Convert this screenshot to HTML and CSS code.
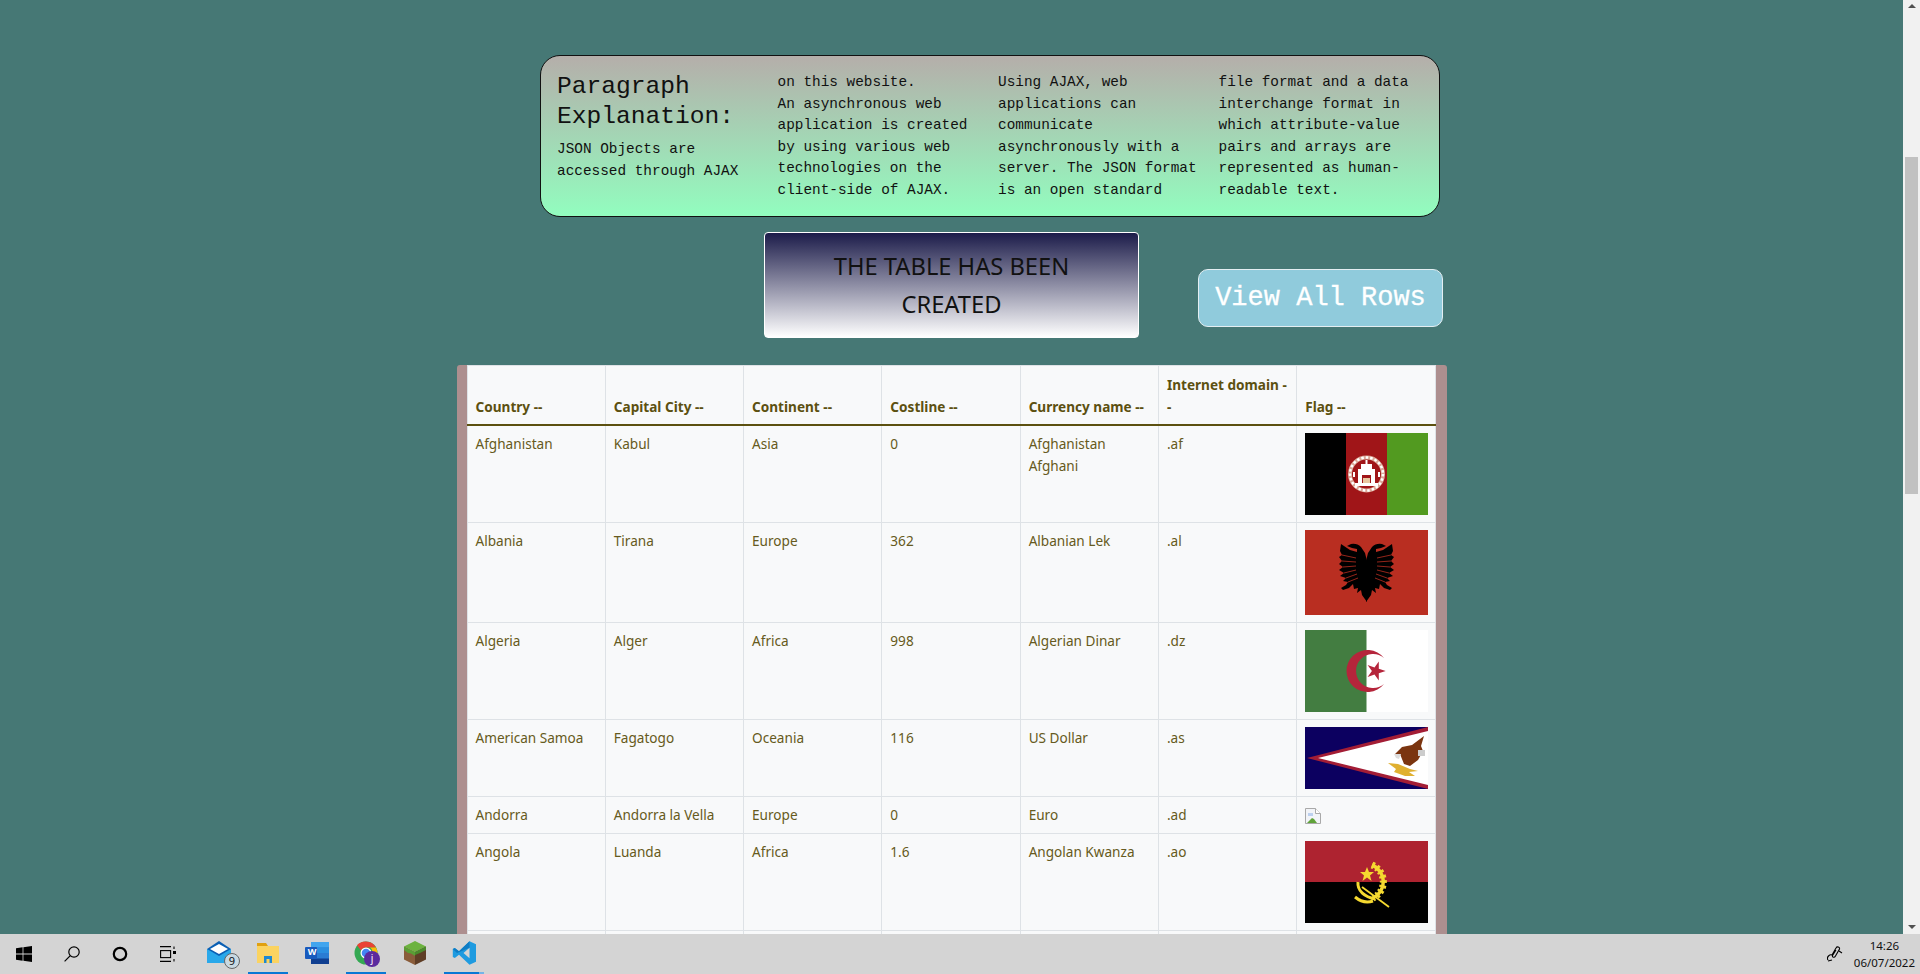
FILE: index.html
```html
<!DOCTYPE html>
<html lang="en">
<head>
    <meta charset="UTF-8">
    <title>Countries Table</title>
    <link rel="stylesheet" href="styles.css">
</head>
<body>
    <div class="window">
        <div class="page">
            <div class="explain">
                <h2>Paragraph Explanation:</h2>
                <p>JSON Objects are accessed through AJAX on this website.<br>An asynchronous web application is created by using various web technologies on the client-side of AJAX. Using AJAX, web applications can communicate asynchronously with a server. The JSON format is an open standard file format and a data interchange format in which attribute-value pairs and arrays are represented as human-readable text.</p>
            </div>

            <div class="actions">
                <div class="created">THE TABLE HAS BEEN CREATED</div>
                <button class="view-all">View All Rows</button>
            </div>

            <div class="table-wrap">
                <table>
                    <thead>
                        <tr>
                            <th>Country --</th>
                            <th>Capital City --</th>
                            <th>Continent --</th>
                            <th>Costline --</th>
                            <th>Currency name --</th>
                            <th>Internet domain --</th>
                            <th>Flag --</th>
                        </tr>
                    </thead>
                    <tbody>
                        <tr>
                            <td>Afghanistan</td>
                            <td>Kabul</td>
                            <td>Asia</td>
                            <td>0</td>
                            <td>Afghanistan Afghani</td>
                            <td>.af</td>
                            <td>
                                <svg class="flag" viewBox="0 0 123 82">
                                    <rect width="41" height="82" fill="#000"/>
                                    <rect x="41" width="41" height="82" fill="#a01518"/>
                                    <rect x="82" width="41" height="82" fill="#529a20"/>
                                    <circle cx="61.5" cy="41" r="16.5" fill="none" stroke="#dba898" stroke-width="4"/>
                                    <circle cx="61.5" cy="41" r="16.5" fill="none" stroke="#fff" stroke-width="2.5" stroke-dasharray="2.5 2"/>
                                    <path d="M50 50h23v3H50z" fill="#fff"/>
                                    <path d="M53 36h17v14h-4v-8h-9v8h-4z" fill="#fff"/>
                                    <path d="M56 31h11v5H56zM60.5 27h2v4h-2z" fill="#fff"/>
                                    <path d="M58 45h7v5h-7z" fill="#e8c8a0"/>
                                    <path d="M48 39h2v5h-2zM73 39h2v5h-2z" fill="#fff"/>
                                </svg>
                            </td>
                        </tr>
                        <tr>
                            <td>Albania</td>
                            <td>Tirana</td>
                            <td>Europe</td>
                            <td>362</td>
                            <td>Albanian Lek</td>
                            <td>.al</td>
                            <td>
                                <svg class="flag" viewBox="0 0 123 85">
                                    <rect width="123" height="85" fill="#b92e21"/>
                                    <g id="eagle-half">
                                        <path d="M62 72L57 65L56 60L52 63L53 58L49 59L48 54L44 58L38 60L36 58L41 55L43 52L38 51L41 48L35 46L39 43L34 40L38 37L34 34L37 31L34 27L37 25L35 21L36 14L45 20L52 22L52 19L47 18L42 16L46 14Q52 13 56 17L60 23L62 31Z" fill="#000"/>
                                        <path d="M51 28L37 25M51 32L37 31M51 36L38 37M51 40L39 43M52 44L41 48M53 48L43 52" fill="none" stroke="#b92e21" stroke-width=".8"/>
                                    </g>
                                    <use href="#eagle-half" transform="matrix(-1 0 0 1 123 0)"/>
                                </svg>
                            </td>
                        </tr>
                        <tr>
                            <td>Algeria</td>
                            <td>Alger</td>
                            <td>Africa</td>
                            <td>998</td>
                            <td>Algerian Dinar</td>
                            <td>.dz</td>
                            <td>
                                <svg class="flag" viewBox="0 0 123 82">
                                    <rect width="123" height="82" fill="#fff"/>
                                    <rect width="61.5" height="82" fill="#437d41"/>
                                    <path d="M79 28A21 21 0 1 0 79 54A17 17 0 1 1 79 28Z" fill="#b5253b"/>
                                    <polygon points="80.7,41 73.8,43.25 73.8,50.5 69.5,44.6 62.6,46.9 66.9,41 62.6,35.1 69.5,37.4 73.8,31.5 73.8,38.75" fill="#b5253b"/>
                                </svg>
                            </td>
                        </tr>
                        <tr>
                            <td>American Samoa</td>
                            <td>Fagatogo</td>
                            <td>Oceania</td>
                            <td>116</td>
                            <td>US Dollar</td>
                            <td>.as</td>
                            <td>
                                <svg class="flag" viewBox="0 0 123 62">
                                    <rect width="123" height="62" fill="#0c0060"/>
                                    <polygon points="2,31 123,0 123,62" fill="#a31d35"/>
                                    <polygon points="13,31 123,4 123,58" fill="#fff"/>
                                    <path d="M119 9L116 19L118 24L113 33L105 39L99 37L95 27L90 27L97 20L107 18Z" fill="#7b3510"/>
                                    <path d="M89 27L96 27L94 32L91 31Z" fill="#ddd"/>
                                    <path d="M113 23h7v6h-7z" fill="#ccc"/>
                                    <path d="M83 36L93 37L105 42L113 44L104 45L110 49L100 49L89 45L91 42Z" fill="#e0b030"/>
                                </svg>
                            </td>
                        </tr>
                        <tr>
                            <td>Andorra</td>
                            <td>Andorra la Vella</td>
                            <td>Europe</td>
                            <td>0</td>
                            <td>Euro</td>
                            <td>.ad</td>
                            <td>
                                <svg class="broken" viewBox="0 0 16 16">
                                    <path d="M.5.5h10l5 5v10H.5z" fill="#f2f4f8" stroke="#a9a9a9"/>
                                    <path d="M10.5.5v5h5" fill="#fff" stroke="#a9a9a9"/>
                                    <path d="M3 5h5v3H3z" fill="#bcd0ef"/>
                                    <path d="M2 15l5-5 2 1 3 4z" fill="#5fa33a"/>
                                </svg>
                            </td>
                        </tr>
                        <tr>
                            <td>Angola</td>
                            <td>Luanda</td>
                            <td>Africa</td>
                            <td>1.6</td>
                            <td>Angolan Kwanza</td>
                            <td>.ao</td>
                            <td>
                                <svg class="flag" viewBox="0 0 123 82">
                                    <rect width="123" height="41" fill="#ae2330"/>
                                    <rect y="41" width="123" height="41" fill="#000"/>
                                    <g fill="none" stroke="#f5d930">
                                        <path d="M67 24A18 18 0 0 1 68 57" stroke-width="3.5"/>
                                        <path d="M67 24A18 18 0 0 1 68 57" stroke-width="7" stroke-dasharray="2.5 2.5"/>
                                        <path d="M53 41C52 50 60 56 70 58M50 56C56 61 62 62 68 60" stroke-width="3"/>
                                        <path d="M57 46L84 66" stroke-width="1.8"/>
                                    </g>
                                    <polygon points="62,26 64,31 69,31 65,34.5 66.5,40 62,36.5 57.5,40 59,34.5 55,31 60,31" fill="#f5d930"/>
                                </svg>
                            </td>
                        </tr>
                        <tr class="empty-row">
                            <td></td>
                            <td></td>
                            <td></td>
                            <td></td>
                            <td></td>
                            <td></td>
                            <td></td>
                        </tr>
                    </tbody>
                </table>
            </div>
        </div>

        <div class="scrollbar">
            <span class="arrow-up"></span>
            <div class="thumb"></div>
            <span class="arrow-down"></span>
        </div>
    </div>

    <div class="taskbar">
        <div class="tb-system">
            <div class="tb-slot">
                <svg class="icon-16" viewBox="0 0 16 16"><path d="M0 2.3L6.6 1.3V7.6H0zM7.4 1.2L16 0V7.6H7.4zM0 8.4H6.6V14.7L0 13.7zM7.4 8.4H16V16L7.4 14.8z" fill="#000"/></svg>
            </div>
            <div class="tb-slot">
                <svg class="icon-16" viewBox="0 0 16 16" fill="none" stroke="#000" stroke-width="1.2"><circle cx="10" cy="6" r="5.2"/><path d="M6.3 9.7L.6 15.4"/></svg>
            </div>
            <div class="tb-slot">
                <svg class="icon-16" viewBox="0 0 16 16" fill="none" stroke="#000" stroke-width="2.2"><circle cx="8" cy="8" r="6.2"/></svg>
            </div>
            <div class="tb-slot">
                <svg class="icon-16" viewBox="0 0 16 16" fill="none" stroke="#000" stroke-width="1.1"><path d="M0 .6H11M0 15.4H11"/><rect x=".6" y="4.6" width="10" height="7"/><path d="M14 .5V3M14 13V15.5"/><rect x="13" y="5" width="3" height="3" fill="#000" stroke="none"/></svg>
            </div>
        </div>
        <div class="tb-apps">
            <div class="tb-app">
                <svg class="icon-24" viewBox="0 0 24 24">
                    <path d="M0 8L12 0L24 8V22H0z" fill="#0a5fb4"/>
                    <path d="M3 8L12 3L21 8L12 13z" fill="#fff"/>
                    <path d="M0 8L12 15L24 8V22H0z" fill="#29a8ea"/>
                </svg>
                <span class="count-badge">9</span>
            </div>
            <div class="tb-app active">
                <svg class="icon-24" viewBox="0 0 24 24">
                    <path d="M1 2H10L12 5H1z" fill="#e0a010"/>
                    <path d="M1 5H23V22H1z" fill="#fbd360"/>
                    <path d="M8 22V15H16V22H13.5V18H10.5V22z" fill="#1e88d0"/>
                </svg>
            </div>
            <div class="tb-app">
                <svg class="icon-24" viewBox="0 0 24 24">
                    <rect x="6" y="1" width="18" height="22" rx="1" fill="#2b7cd3"/>
                    <rect x="6" y="1" width="18" height="5.5" fill="#41a5ee"/>
                    <rect x="6" y="6.5" width="18" height="5.5" fill="#2b8fe0"/>
                    <rect x="6" y="12" width="18" height="5.5" fill="#2b7cd3"/>
                    <rect x="6" y="17.5" width="18" height="5.5" fill="#103f91"/>
                    <rect x="0" y="6" width="12" height="12" rx="1" fill="#185abd"/>
                </svg>
                <span class="word-w">W</span>
            </div>
            <div class="tb-app active">
                <svg class="icon-24" viewBox="0 0 24 24">
                    <circle cx="12" cy="12" r="11.5" fill="#34a853"/>
                    <path d="M12 .5A11.5 11.5 0 0 1 22 6.5H12A5.5 5.5 0 0 0 7 9.5L3 4.2A11.5 11.5 0 0 1 12 .5z" fill="#ea4335"/>
                    <path d="M22 6.5A11.5 11.5 0 0 1 12 23.5L17 15A5.5 5.5 0 0 0 16 6.5z" fill="#fbbc05"/>
                    <circle cx="12" cy="12" r="5.5" fill="#fff"/>
                    <circle cx="12" cy="12" r="4.3" fill="#4285f4"/>
                </svg>
                <span class="profile-badge">j</span>
            </div>
            <div class="tb-app">
                <svg class="icon-24" viewBox="0 0 24 24">
                    <path d="M12 0L23 5.5L12 11L1 5.5z" fill="#6cb33f"/>
                    <path d="M1 5.5L12 11V24L1 18.5z" fill="#8a5c3a"/>
                    <path d="M23 5.5L12 11V24L23 18.5z" fill="#5f3e26"/>
                    <path d="M1 5.5L12 11V15L8 12.5L5 12L1 9z" fill="#5a9e35"/>
                    <path d="M23 5.5L12 11V14L17 12L23 9z" fill="#4a8a2c"/>
                </svg>
            </div>
            <div class="tb-app active code">
                <svg class="icon-24" viewBox="0 0 24 24">
                    <path d="M17.5.2L24 3.3V20.7L17.5 23.8L7 13.8L2.8 17L.8 16V8L2.8 7L7 10.2zM17.5 6.8L11.5 12L17.5 17.2z" fill="#1f9be0"/>
                    <path d="M17.5.2L7 10.2L2.8 7L.8 8L5 12L17.5 6.8z" fill="#0e7cc4"/>
                </svg>
            </div>
        </div>
        <div class="tb-tray">
            <svg class="icon-16" viewBox="0 0 16 16" fill="none" stroke="#000" stroke-width="1.1">
                <path d="M1 14C-1 11 3 8 5 9L9 2C10 0 13 1 12.5 3L8.5 10C7.5 12 5 11.5 5.5 9.5L9 4"/>
                <path d="M12 5L15 7M1 15L5 14"/>
            </svg>
            <div class="clock">
                <span>14:26</span>
                <span>06/07/2022</span>
            </div>
        </div>
    </div>
</body>
</html>
```

FILE: styles.css
```css
* {
    box-sizing: border-box;
}
html, body {
    margin: 0;
    height: 974px;
    overflow: hidden;
}
body {
    font-family: "Noto Sans", "Open Sans", sans-serif;
    font-size: 13.6px;
    line-height: 21.6px;
    display: flex;
    flex-direction: column;
}
.window {
    flex: 1;
    display: flex;
    min-height: 0;
}
.page {
    flex: 1;
    min-width: 0;
    overflow: hidden;
    background-color: #467875;
    padding-top: 55px;
}

/* paragraph box */
.explain {
    width: 900px;
    height: 162px;
    margin-left: 540px;
    padding: 16px 16px 14px;
    border: 1px solid #111;
    border-radius: 20px;
    background: linear-gradient(#b5aeaa, #92fdbf);
    font-family: "Liberation Mono", monospace;
    font-size: 14.4px;
    color: #111;
    column-count: 4;
    column-gap: 16px;
}
.explain h2 {
    margin: 0 0 8px;
    font-size: 24.6px;
    font-weight: normal;
    line-height: 1.2;
}
.explain p {
    margin: 0;
}

/* title and button */
.actions {
    display: flex;
    align-items: center;
    gap: 59px;
    padding-left: 764px;
    margin-top: 15px;
}
.created {
    width: 375px;
    height: 106px;
    padding: 14px 50px;
    border: 1px solid #fff;
    border-radius: 4px;
    background: linear-gradient(#1c1c4a, #fff);
    color: #111;
    font-size: 23.7px;
    line-height: 38px;
    text-align: center;
}
.view-all {
    width: 245px;
    height: 58px;
    margin-top: 26px;
    padding: 0;
    border: 1px solid #e4eef2;
    border-radius: 10px;
    background-color: #90cbdc;
    color: #fff;
    font-family: "Liberation Mono", monospace;
    font-size: 27px;
    -webkit-text-stroke: 0.3px #fff;
}

/* table */
.table-wrap {
    width: 990px;
    margin: 27px auto 0;
    padding: 0 11px 0 10px;
    background-color: #ad8f8f;
    border-radius: 3px 3px 0 0;
}
table {
    width: 100%;
    table-layout: fixed;
    border-collapse: collapse;
    background-color: #f8f9fa;
    color: #665a20;
}
th, td {
    padding: 7px 8px;
    border: 1px solid #dee2e6;
    text-align: left;
    vertical-align: top;
}
th {
    padding: 8px 8px 7px;
    vertical-align: bottom;
    border-bottom: 2px solid #5c5010;
    color: #5c5010;
    font-weight: bold;
}
.empty-row td {
    height: 38px;
}
.flag {
    display: block;
    width: 123px;
}
.broken {
    display: block;
    width: 16px;
    height: 16px;
    margin-top: 4px;
    margin-bottom: -1px;
}

/* fake scrollbar */
.scrollbar {
    width: 17px;
    display: flex;
    flex-direction: column;
    align-items: center;
    background-color: #f1f1f1;
}
.arrow-up, .arrow-down {
    width: 0;
    height: 0;
    border-left: 4px solid transparent;
    border-right: 4px solid transparent;
}
.arrow-up {
    margin-top: 4px;
    border-bottom: 4px solid #505050;
}
.arrow-down {
    margin-top: auto;
    margin-bottom: 5px;
    border-top: 4px solid #505050;
}
.thumb {
    width: 13px;
    height: 337px;
    margin-top: 149px;
    background-color: #c1c1c1;
}

/* taskbar */
.taskbar {
    height: 40px;
    flex-shrink: 0;
    display: flex;
    align-items: center;
    background-color: #d4d4d4;
    color: #111;
}
.tb-system {
    display: flex;
}
.tb-slot {
    width: 48px;
    height: 40px;
    display: flex;
    align-items: center;
    justify-content: center;
}
.icon-16 {
    width: 16px;
    height: 16px;
}
.icon-24 {
    width: 24px;
    height: 24px;
}
.tb-apps {
    display: flex;
    gap: 9px;
    margin-left: 7px;
}
.tb-app {
    position: relative;
    width: 40px;
    height: 40px;
    display: flex;
    align-items: center;
    justify-content: center;
    border-bottom: 2px solid transparent;
}
.tb-app.active {
    border-bottom-color: #0a78d4;
}
.tb-app.code {
    border-image: linear-gradient(90deg, #0a78d4 85%, #74b4e8 85%) 1;
}
.count-badge {
    position: absolute;
    left: 25px;
    top: 19px;
    width: 16px;
    height: 16px;
    border: 1px solid #666;
    border-radius: 50%;
    background-color: #c9d9e2;
    font-size: 11px;
    line-height: 14px;
    text-align: center;
}
.word-w {
    position: absolute;
    left: 9px;
    top: 12px;
    width: 12px;
    color: #fff;
    font-size: 9px;
    font-weight: bold;
    line-height: 12px;
    text-align: center;
}
.profile-badge {
    position: absolute;
    left: 18px;
    top: 17px;
    width: 16px;
    height: 16px;
    border-radius: 50%;
    background-color: #5b2a9e;
    color: #fff;
    font-size: 10px;
    line-height: 15px;
    text-align: center;
}
.tb-tray {
    margin-left: auto;
    display: flex;
    align-items: center;
    gap: 11px;
    padding-right: 5px;
}
.clock {
    display: flex;
    flex-direction: column;
    align-items: center;
    font-size: 11.5px;
    line-height: 17px;
}
```
